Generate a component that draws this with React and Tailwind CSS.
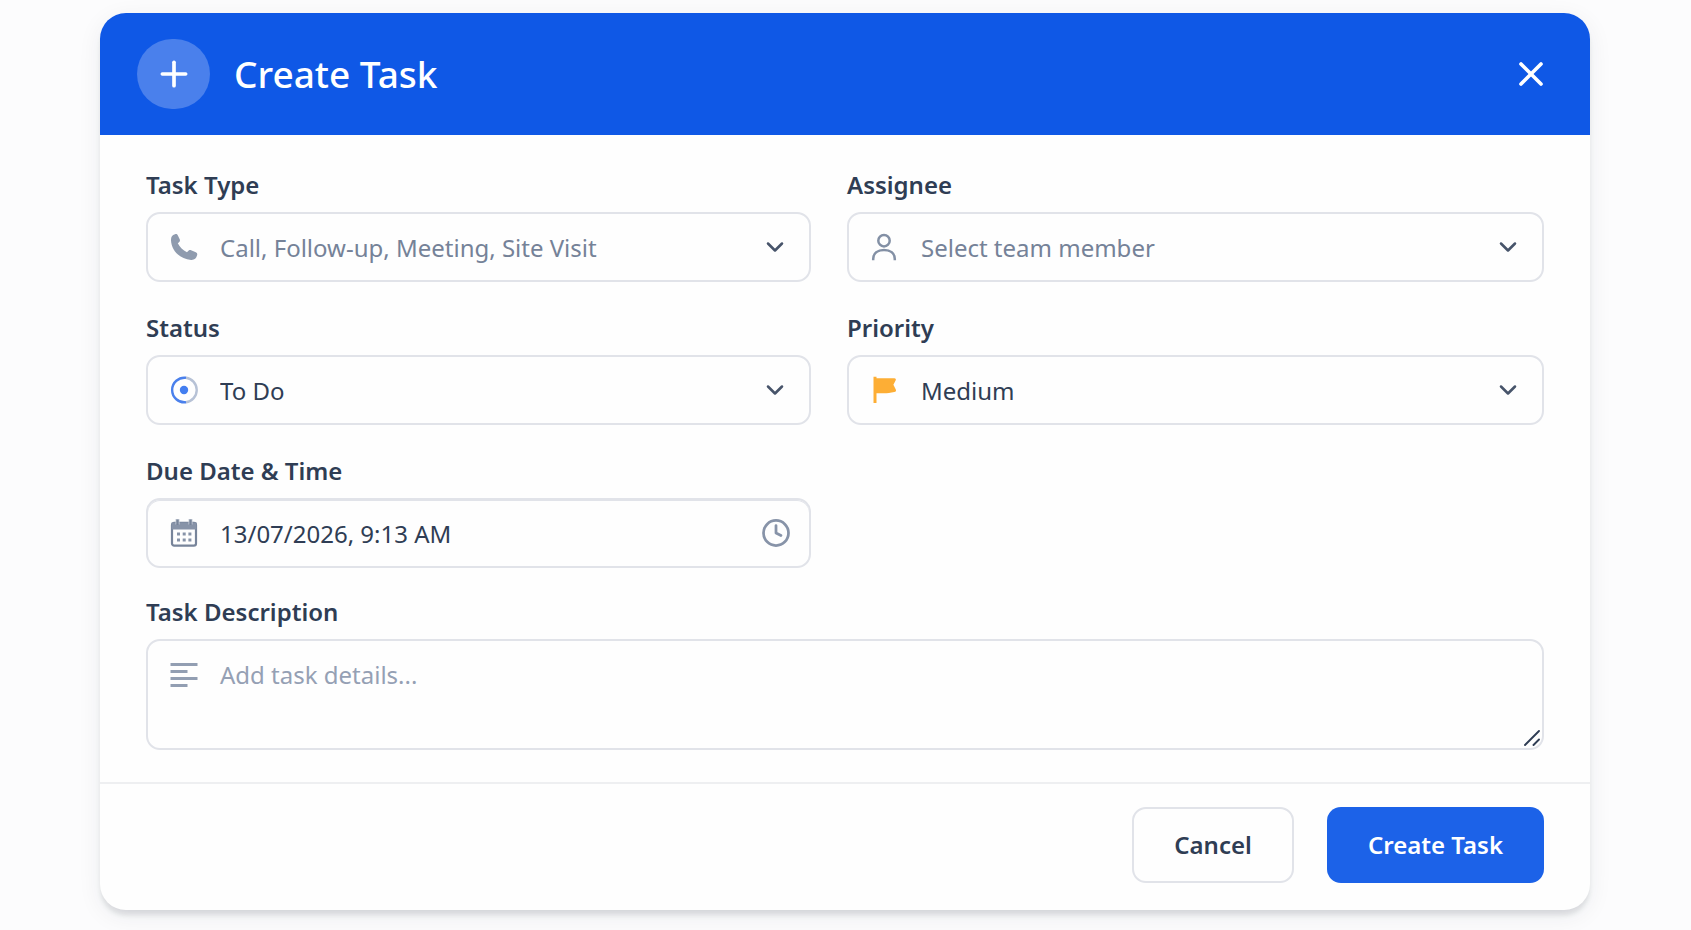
import { useState } from "react";
import { ChevronDown, Clock, Plus, X } from "lucide-react";

// Shared field styles
const fieldClass =
  "block w-full h-[70px] appearance-none rounded-[14px] border-2 border-[#e1e3e9] bg-[#fefefe] pl-[72px] pr-16 text-[24px] leading-8 outline-none focus:border-blue-500";
const iconClass = "pointer-events-none absolute left-6 top-1/2 -translate-y-1/2";

function PhoneIcon() {
  return (
    <svg viewBox="0 0 28 28" className={`${iconClass} size-7`} fill="#8f9bae">
      <path d="M5 1.300c1.600-.5 2.400 0 3 1.500l1.700 3.500c.6 1.500.2 2.300-1.900 4 2.100 4 5 6.900 9.200 8.900 2-2.200 2.700-2.500 4.100-1.900l4.700 2c1.400.7 1.700 1.600 1.300 3-.8 3.200-2.800 4.800-6 4.600C10 26.300 1.500 17.500 1 7.500.9 4 2 2 5 1.300z" />
    </svg>
  );
}

function UserIcon() {
  return (
    <svg viewBox="0 0 28 28" className={`${iconClass} size-7`} fill="none" stroke="#8390a5" strokeWidth="2.500">
      <circle cx="13" cy="7.700" r="5.700" />
      <path d="M2.200 27.200v-1.200C2.200 20 6.800 17 13 17s10.800 3 10.800 9v1.200" />
    </svg>
  );
}

function StatusIcon() {
  return (
    <svg viewBox="0 0 28 28" className={`${iconClass} size-7`} fill="none" strokeWidth="2.400">
      <path d="M16 1.800A12.300 12.300 0 0 1 16 26.200" stroke="#b7c2d6" />
      <path d="M16 1.800A12.300 12.300 0 1 0 16 26.200" stroke="#4a80ec" />
      <circle cx="14" cy="14" r="4.200" fill="#437ef0" />
    </svg>
  );
}

function FlagIcon() {
  return (
    <svg viewBox="0 0 28 28" className={`${iconClass} size-7`} fill="#fdae35">
      <path d="M2.500 .8h3v1.400h17.800c1.400 0 2 1.200 1.300 2.300l-2.200 4.300 2.400 4.700c.6 1.400 0 2.500-1.500 2.500-4.500 1.200-8.600 1.300-12.300 1.200H5.500v9.800h-3z" />
    </svg>
  );
}

function CalendarIcon() {
  return (
    <svg viewBox="0 0 28 28" className={`${iconClass} size-7`}>
      <rect x="2" y="3.800" width="24" height="22.800" rx="2.200" fill="none" stroke="#77849a" strokeWidth="2.200" />
      <path d="M1.500 3.500h25v7h-25z" fill="#8793a8" />
      <path d="M7.500 0v5.500M20.500 0v5.500" stroke="#c9cfd9" strokeWidth="4" />
      <path d="M7.500 .5v5.500M20.500 .5v5.500" stroke="#77849a" strokeWidth="2.400" />
      <path
        d="M7 13.500h3v3H7zM12.700 13.500h3v3h-3zM18.400 13.500h3v3h-3zM7 19.500h3v3H7zM12.700 19.500h3v3h-3zM18.400 19.500h3v3h-3z"
        fill="#8793a8"
      />
    </svg>
  );
}

function Field({ id, label, children }) {
  return (
    <div className="flex flex-col gap-[11px]">
      <label htmlFor={id} className="self-start text-[24px] leading-8 font-semibold text-[#2f3d54]">
        {label}
      </label>
      <div className="relative">{children}</div>
    </div>
  );
}

function SelectField({ id, label, icon, value, onChange, options, placeholder }) {
  return (
    <Field id={id} label={label}>
      <select
        id={id}
        name={id}
        value={value}
        onChange={onChange}
        className={`${fieldClass} pt-0.5 ${value ? "text-[#2f3d54]" : "text-[#758298]"}`}
      >
        {placeholder && <option value="">{placeholder}</option>}
        {options.map((option) => (
          <option key={option} value={option}>{option}</option>
        ))}
      </select>
      {icon}
      <ChevronDown className="pointer-events-none absolute right-[22px] top-1/2 size-7 -translate-y-1/2 text-[#47546a]" strokeWidth={2.2} />
    </Field>
  );
}

export default function App() {
  const [task, setTask] = useState({
    taskType: "",
    assignee: "",
    status: "To Do",
    priority: "Medium",
    dueDate: "13/07/2026, 9:13 AM",
    description: "",
  });

  const handleChange = (e) => {
    const { name, value } = e.target;
    setTask({ ...task, [name]: value });
  };

  const handleSubmit = (e) => {
    e.preventDefault();
  };

  return (
    <div className="min-h-screen bg-[#fcfcfd] pt-[13px] pr-[101px] pb-5 pl-[100px] font-['Noto_Sans',sans-serif]">
      <form
        onSubmit={handleSubmit}
        className="overflow-hidden rounded-[26px] bg-[#fefefe] shadow-[0_6px_5px_-1px_rgba(30,41,59,0.12),0_6px_24px_rgba(30,41,59,0.07)]"
      >
        {/* Header */}
        <header className="flex h-[122px] items-center bg-[#0f58e6] pr-[39px] pl-[37px] text-white">
          <span className="flex h-[70px] w-[73px] items-center justify-center rounded-full bg-[#4a80ec]">
            <Plus className="size-10" strokeWidth={2.2} />
          </span>
          <h1 className="ml-6 text-[37px] leading-[48px] font-medium">Create Task</h1>
          <button type="button" aria-label="Close" className="ml-auto">
            <X className="size-10" strokeWidth={2.2} />
          </button>
        </header>

        {/* Fields */}
        <div className="flex flex-col gap-7 px-[46px] pt-[34px] pb-8">
          <div className="grid grid-cols-[665fr_697fr] gap-x-9 gap-y-[30px]">
            <SelectField
              id="taskType"
              label="Task Type"
              icon={<PhoneIcon />}
              value={task.taskType}
              onChange={handleChange}
              placeholder="Call, Follow-up, Meeting, Site Visit"
              options={["Call", "Follow-up", "Meeting", "Site Visit"]}
            />
            <SelectField
              id="assignee"
              label="Assignee"
              icon={<UserIcon />}
              value={task.assignee}
              onChange={handleChange}
              placeholder="Select team member"
              options={[]}
            />
            <SelectField
              id="status"
              label="Status"
              icon={<StatusIcon />}
              value={task.status}
              onChange={handleChange}
              options={["To Do"]}
            />
            <SelectField
              id="priority"
              label="Priority"
              icon={<FlagIcon />}
              value={task.priority}
              onChange={handleChange}
              options={["Medium"]}
            />
            <Field id="dueDate" label="Due Date & Time">
              <input
                id="dueDate"
                name="dueDate"
                type="text"
                value={task.dueDate}
                onChange={handleChange}
                className={`${fieldClass} text-[#2f3d54] inset-shadow-[0_1px_0_#e1e3e9]`}
              />
              <CalendarIcon />
              <Clock className="pointer-events-none absolute right-5 top-1/2 size-[30px] -translate-y-1/2 text-[#8793a8]" strokeWidth={2.2} />
            </Field>
          </div>

          <Field id="description" label="Task Description">
            <textarea
              id="description"
              name="description"
              value={task.description}
              onChange={handleChange}
              placeholder="Add task details..."
              className="block h-[111px] w-full resize-none rounded-[14px] border-2 border-[#e1e3e9] bg-[#fefefe] pt-[18px] pr-6 pl-[72px] text-[24px] leading-8 text-[#2f3d54] outline-none placeholder:text-[#95a0b4] focus:border-blue-500"
            />
            <svg viewBox="0 0 28 28" className="pointer-events-none absolute top-[22px] left-6 size-7" stroke="#929eb2" strokeWidth="2.800">
              <path d="M0.500 3.500h27M0.500 10.500h17M0.500 17.500h27M0.500 24.500h17" />
            </svg>
            <svg viewBox="0 0 16 16" className="pointer-events-none absolute right-1 bottom-1 size-4" stroke="#2f3d54" strokeWidth="1.900" strokeLinecap="round">
              <path d="M1 15L15 1M9.500 15L15 9.500" />
            </svg>
          </Field>
        </div>

        {/* Actions */}
        <footer className="flex justify-end gap-[33px] border-t-2 border-[#eeeff1] px-[46px] pt-[23px] pb-[27px]">
          <button
            type="button"
            className="h-[76px] w-[162px] rounded-[14px] border-2 border-[#e1e3e9] bg-[#fefefe] text-[24px] leading-8 font-semibold text-[#2f3d54]"
          >
            Cancel
          </button>
          <button type="submit" className="h-[76px] w-[217px] rounded-[14px] bg-[#1c62e8] text-[24px] leading-8 font-semibold text-white">
            Create Task
          </button>
        </footer>
      </form>
    </div>
  );
}
